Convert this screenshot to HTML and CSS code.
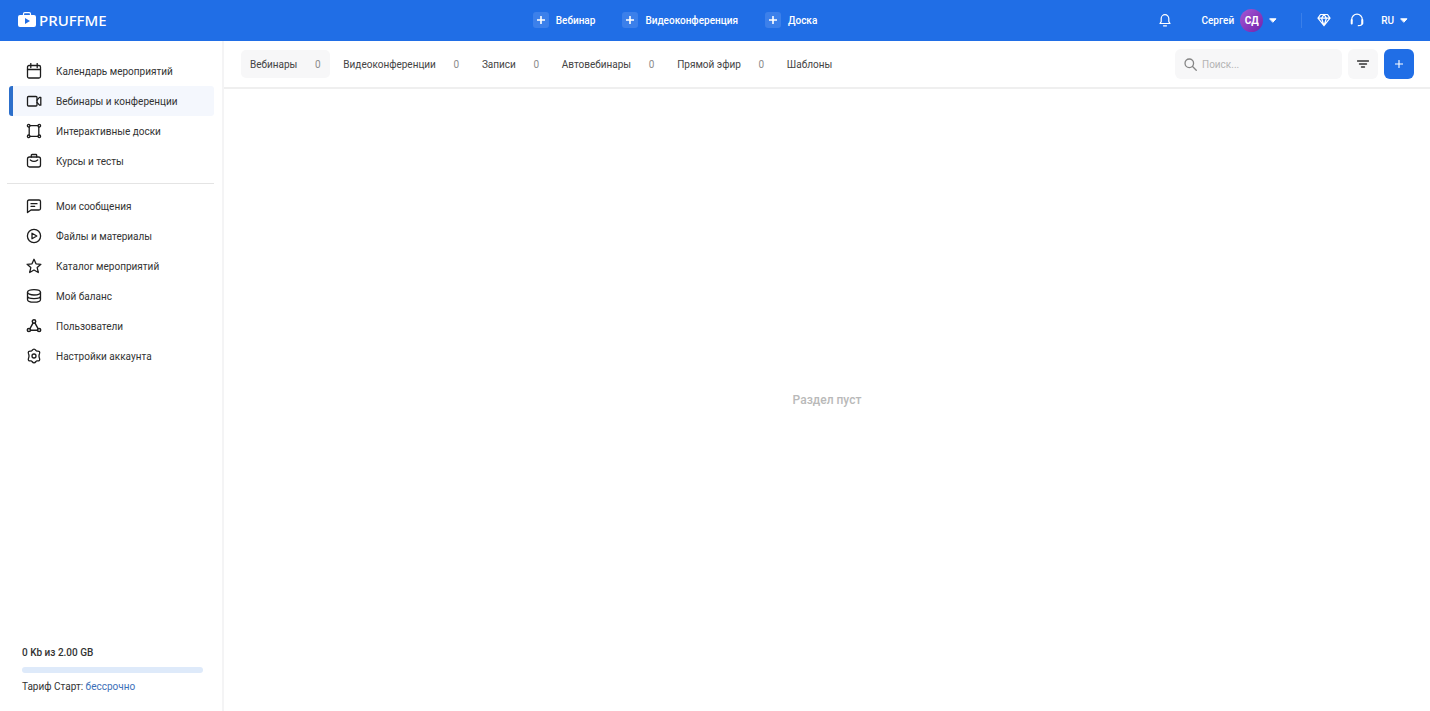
FILE: index.html
```html
<!DOCTYPE html>
<html lang="ru">
<head>
<meta charset="utf-8">
<meta name="viewport" content="width=device-width, initial-scale=1">
<title>Pruffme</title>
<link rel="stylesheet" href="styles.css">
</head>
<body>
<header class="topbar">
  <a class="logo" href="#">
    <svg class="logo-mark" viewBox="0 0 18 16"><path fill="none" stroke="#fff" stroke-width="1.200" d="M5.500 3.500V2q0-1.300 1.300-1.300h4.400q1.300 0 1.300 1.300v1.500"/><path fill="#fff" stroke="none" fill-rule="evenodd" d="M2 3h14q2 0 2 2v8q0 2-2 2H2q-2 0-2-2V5q0-2 2-2zM7 6v6L12 9z"/></svg>
    <span>PRUFFME</span>
  </a>
  <nav class="create">
    <button class="create-btn"><span class="plus"><svg class="plus-icon" viewBox="0 0 8 8"><path d="M4 .5v7M.5 4h7"/></svg></span>Вебинар</button>
    <button class="create-btn"><span class="plus"><svg class="plus-icon" viewBox="0 0 8 8"><path d="M4 .5v7M.5 4h7"/></svg></span>Видеоконференция</button>
    <button class="create-btn"><span class="plus"><svg class="plus-icon" viewBox="0 0 8 8"><path d="M4 .5v7M.5 4h7"/></svg></span>Доска</button>
  </nav>
  <div class="account">
    <button class="icon-btn" aria-label="Уведомления"><svg class="icon-sm" viewBox="0 0 14 14"><path d="M2 10.500h10L10.800 8.600V5.500a3.800 3.800 0 0 0-7.600 0v3.100zM5.500 12.800h3"/></svg></button>
    <button class="user">Сергей<span class="avatar">СД</span><svg class="caret" viewBox="0 0 8 5"><path d="M1 .8h6L4 4z"/></svg></button>
    <div class="tools">
      <button class="icon-btn" aria-label="Тарифы"><svg class="icon-sm" viewBox="0 0 14 14"><path d="M3.500 1.500h7L13 5.200 7 12.700 1 5.200zM1 5.200h12M4.600 5.200 7 1.500l2.400 3.700L7 12.700z"/></svg></button>
      <button class="icon-btn" aria-label="Поддержка"><svg class="icon-sm" viewBox="0 0 14 14"><path d="M1.700 8V6.500a5.300 5.300 0 0 1 10.600 0V10q0 2.700-4 2.700"/><path stroke-width="2" d="M1.700 7v3.500M12.300 7v3.500"/></svg></button>
      <button class="lang">RU<svg class="caret" viewBox="0 0 8 5"><path d="M1 .8h6L4 4z"/></svg></button>
    </div>
  </div>
</header>
<div class="layout">
  <aside class="sidebar">
    <nav class="menu">
      <a class="item" href="#"><svg class="icon" viewBox="0 0 16 16"><rect x="1.500" y="2.500" width="13" height="12.500" rx="1.500"/><path d="M1.500 6.500h13M4.800.500v4M11.200.500v4"/></svg>Календарь мероприятий</a>
      <a class="item active" href="#"><svg class="icon" viewBox="0 0 16 16"><rect x="1.500" y="3.500" width="9.500" height="9.500" rx="1"/><path d="m11 7.200 2.500-2.900h1.300v7.900h-1.300L11 9.300"/></svg>Вебинары и конференции</a>
      <a class="item" href="#"><svg class="icon" viewBox="0 0 16 16"><path d="M4 2.700h8M4 13.300h8M3.200 4v8M12.800 4v8"/><circle cx="2.700" cy="2.700" r="1.300"/><circle cx="13.300" cy="2.700" r="1.300"/><circle cx="2.700" cy="13.300" r="1.300"/><circle cx="13.300" cy="13.300" r="1.300"/></svg>Интерактивные доски</a>
      <a class="item" href="#"><svg class="icon" viewBox="0 0 16 16"><rect x="1.500" y="4" width="13" height="10" rx="2"/><path d="M5.300 4V2.300q0-.8.8-.8h3.800q.8 0 .8.800V4M4.300 7q3.700 2.800 7.400 0"/></svg>Курсы и тесты</a>
    </nav>
    <nav class="menu menu-second">
      <a class="item" href="#"><svg class="icon" viewBox="0 0 16 16"><path d="M3 2h10q1.500 0 1.500 1.500v7q0 1.500-1.500 1.500H5l-3.500 2.500v-11Q1.500 2 3 2zM5 5.700h6M5 8.300h3.700"/></svg>Мои сообщения</a>
      <a class="item" href="#"><svg class="icon" viewBox="0 0 16 16"><circle cx="8" cy="8" r="6.600"/><path d="M6 5.200v5.600L10.800 8z"/></svg>Файлы и материалы</a>
      <a class="item" href="#"><svg class="icon" viewBox="0 0 16 16"><path d="m8 1.300 2 4.500 4.900.5-3.700 3.300 1.100 4.900L8 12l-4.300 2.500 1.100-4.900L1.100 6.300 6 5.800z"/></svg>Каталог мероприятий</a>
      <a class="item" href="#"><svg class="icon" viewBox="0 0 16 16"><ellipse cx="8" cy="4.300" rx="6.500" ry="2.700"/><path d="M1.500 4.300v7.200c0 3.600 13 3.600 13 0V4.300M1.500 8c0 3.500 13 3.500 13 0"/></svg>Мой баланс</a>
      <a class="item" href="#"><svg class="icon" viewBox="0 0 16 16"><g stroke-width="1.500"><circle cx="8" cy="3.500" r="1.700"/><circle cx="2.900" cy="12" r="1.600"/><circle cx="13.100" cy="12" r="1.600"/><path d="M7 5.200 4 10.500M9 5.200l3 5.300M4.500 12.300h7"/></g></svg>Пользователи</a>
      <a class="item" href="#"><svg class="icon" viewBox="0 0 16 16"><path d="M6 2.500Q8-.3 10 2.500q.4.700 1.200.6 3.400-.3 2.200 2.900-.4.800-.4 2t.4 2q1.200 3.200-2.200 2.900-.8-.1-1.200.6-2 2.800-4 0-.4-.7-1.200-.6Q1.400 13.200 2.600 10q.4-.8.4-2t-.4-2Q1.400 2.800 4.800 3.100 5.600 3.200 6 2.500z"/><circle cx="8" cy="8" r="2"/></svg>Настройки аккаунта</a>
    </nav>
    <section class="storage">
      <label class="quota" for="quota">0 Kb из 2.00 GB</label>
      <progress class="bar" id="quota" value="0" max="2"></progress>
      <p class="plan">Тариф Старт: <a class="plan-link" href="#">бессрочно</a></p>
    </section>
  </aside>
  <main class="content">
    <div class="toolbar">
      <nav class="tabs">
        <button class="tab selected">Вебинары<span class="count">0</span></button>
        <button class="tab">Видеоконференции<span class="count">0</span></button>
        <button class="tab">Записи<span class="count">0</span></button>
        <button class="tab">Автовебинары<span class="count">0</span></button>
        <button class="tab">Прямой эфир<span class="count">0</span></button>
        <button class="tab">Шаблоны</button>
      </nav>
      <label class="search"><svg class="search-icon" viewBox="0 0 14 14"><circle cx="5.700" cy="5.700" r="4.600"/><path d="m9.200 9.200 4 4"/></svg><input class="search-input" type="text" placeholder="Поиск..." aria-label="Поиск"></label>
      <button class="square" aria-label="Фильтр"><svg class="filter-icon" viewBox="0 0 12 8"><path d="M.5 1h11M2.500 4h7M4.500 7h3"/></svg></button>
      <button class="square primary" aria-label="Добавить"><svg class="add-icon" viewBox="0 0 10 10"><path d="M5 .5v9M.5 5h9"/></svg></button>
    </div>
    <p class="empty">Раздел пуст</p>
  </main>
</div>
</body>
</html>
```
FILE: styles.css
```css
* { box-sizing: border-box; }
body {
  margin: 0;
  min-height: 100vh;
  display: flex;
  flex-direction: column;
  font: 10px/15px Roboto, "Liberation Sans", sans-serif;
  color: #333;
  background: #fff;
}
a { color: inherit; text-decoration: none; }
p { margin: 0; }
button {
  display: flex;
  align-items: center;
  padding: 0;
  border: 0;
  background: none;
  color: inherit;
  font: inherit;
  cursor: pointer;
}
svg { flex: none; fill: none; stroke: currentColor; stroke-linecap: round; stroke-linejoin: round; }

.topbar {
  display: grid;
  grid-template-columns: 1fr auto 1fr;
  align-items: center;
  height: 41px;
  padding: 0 22px 1px 18px;
  background: #206ee6;
  color: #fff;
  font-weight: 500;
}
.logo { display: flex; align-items: center; gap: 3px; font: 500 15px/22px "Noto Sans", sans-serif; }
.logo-mark { width: 18px; height: 16px; }
.create { display: flex; gap: 27px; margin-right: 76px; }
.create-btn { gap: 7px; }
.plus { display: grid; place-items: center; width: 16px; height: 16px; border-radius: 3px; background: #3c80ea; }
.plus-icon { width: 8px; height: 8px; stroke-width: 1.6; }
.account { display: flex; align-items: center; justify-content: flex-end; gap: 24px; }
.icon-btn { width: 14px; height: 14px; }
.icon-sm { width: 14px; height: 14px; stroke-width: 1.2; }
.user { gap: 6px; margin-left: 5px; }
.avatar {
  display: grid;
  place-items: center;
  width: 23px;
  height: 23px;
  border-radius: 50%;
  background: linear-gradient(135deg, #a458d4, #7222ab);
  font-weight: 700;
}
.caret { width: 8px; height: 5px; fill: currentColor; stroke-width: 1; }
.tools { display: flex; align-items: center; gap: 19px; padding-left: 15px; border-left: 1px solid #3a7fe9; }
.lang { gap: 6px; margin-left: -2px; }

.layout { flex: 1; display: flex; }
.sidebar {
  flex: none;
  display: flex;
  flex-direction: column;
  width: 224px;
  padding: 15px 8px 17px 7px;
  border-right: 2px solid #f4f4f5;
}
.menu { display: flex; flex-direction: column; }
.menu-second { margin-top: 7px; padding-top: 7px; border-top: 1px solid #e4e4e4; }
.item {
  display: flex;
  align-items: center;
  gap: 14px;
  height: 30px;
  margin-left: 2px;
  padding-left: 13px;
  border-left: 4px solid transparent;
  border-radius: 3px;
}
.active { border-left-color: #2c6fcb; background: #f4f7fd; }
.icon { width: 16px; height: 16px; stroke-width: 1.3; color: #1c1c1c; }
.storage { display: flex; flex-direction: column; margin-top: auto; padding: 0 11px 0 15px; }
.quota { font-weight: 500; }
.bar { appearance: none; width: 100%; height: 6px; margin: 7px 0 6px; border: 0; border-radius: 3px; background: #deeafa; overflow: hidden; }
.bar::-webkit-progress-bar { background: #deeafa; }
.bar::-webkit-progress-value { background: #206ee6; }
.plan-link { color: #3b6fb8; }

.content { flex: 1; display: flex; flex-direction: column; min-width: 0; }
.toolbar {
  display: flex;
  align-items: center;
  gap: 6px;
  height: 48px;
  padding: 0 16px 0 17px;
  border-bottom: 2px solid #efefef;
}
.tabs { flex: 1; display: flex; gap: 4px; }
.tab { gap: 17px; height: 28px; padding: 0 9px; border-radius: 5px; color: #444; white-space: nowrap; }
.selected { background: #f7f7f8; }
.count { min-width: 7px; color: #8c8c8c; }
.search { display: flex; align-items: center; gap: 5px; width: 167px; height: 30px; padding: 0 9px; border-radius: 6px; background: #f7f7f8; }
.search-icon { width: 13px; height: 13px; stroke: #858585; stroke-width: 1.4; }
.search-input { flex: 1; min-width: 0; padding: 0; border: 0; outline: 0; background: none; font: inherit; }
.search-input::placeholder { color: #b4b4b4; }
.square { justify-content: center; width: 30px; height: 30px; border-radius: 6px; background: #f7f7f8; color: #333; }
.primary { background: #206ee6; color: #fff; }
.filter-icon { width: 12px; height: 8px; stroke-width: 1.4; }
.add-icon { width: 8px; height: 8px; stroke-width: 1.4; }
.empty { margin: auto; color: #b9b9b9; font-size: 12px; font-weight: 500; }
```
